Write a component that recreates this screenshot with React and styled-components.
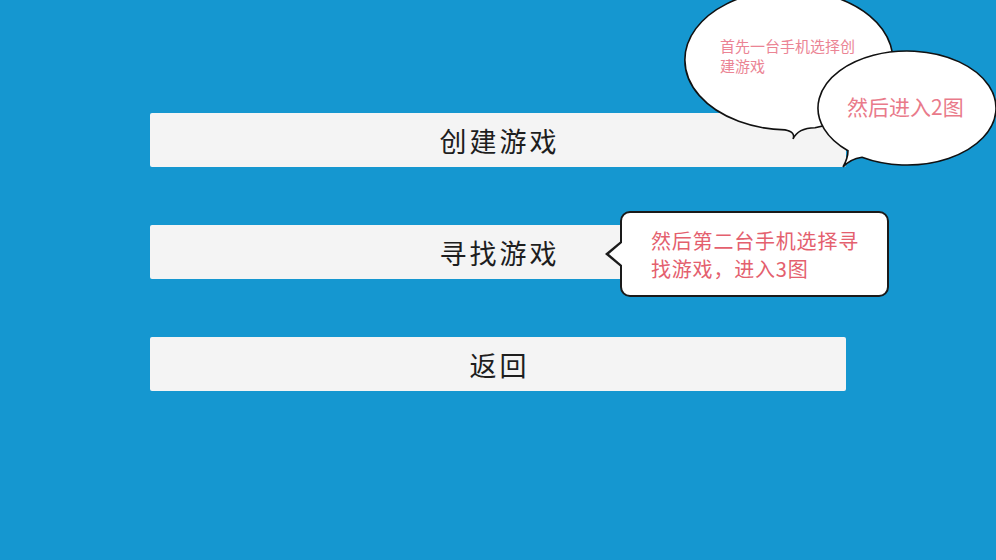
import styled, { createGlobalStyle } from "styled-components";

const GlobalStyle = createGlobalStyle`
	html, body {
		margin: 0;
		padding: 0;
		background: #1597d0;
	}
	body {
		font-family: "Noto Sans CJK SC", "Noto Sans", sans-serif;
	}
`;

const menuItems = ["创建游戏", "寻找游戏", "返回"];

const App = () => {
	return (
		<Stage>
			<GlobalStyle />
			<Menu>
				{menuItems.map((label) => (
					<MenuButton key={label}>{label}</MenuButton>
				))}
			</Menu>

			<Bubbles viewBox="0 0 996 560" width="996" height="560">
				<path
					d="M 785 129.9 A 104 70 0 1 1 815 127.7 Q 798 128 793 139 Q 796 132 785 129.9 Z"
					fill="#fff"
					stroke="#111"
					strokeWidth="1.6"
				/>
				<path
					d="M 848 150.7 A 89 57 0 1 1 862 157.2 Q 850 159 843 167 Q 848 158 848 150.7 Z"
					fill="#fff"
					stroke="#111"
					strokeWidth="1.6"
				/>
			</Bubbles>

			<BubbleText $left={720} $top={36} $size={15} $color="#eb8494">
				首先一台手机选择创
				<br />
				建游戏
			</BubbleText>
			<BubbleText $left={847} $top={93} $size={21} $color="#e97a8a">
				然后进入2图
			</BubbleText>

			<Callout>
				然后第二台手机选择寻
				<br />
				找游戏，进入3图
			</Callout>
		</Stage>
	);
};

const Stage = styled.div`
	position: relative;
	width: 996px;
	height: 560px;
	overflow: hidden;
	background: #1597d0;
`;

const Menu = styled.div`
	display: flex;
	flex-direction: column;
	gap: 58px;
	padding: 113px 0 0 150px;
	width: 696px;
`;

const MenuButton = styled.div`
	height: 54px;
	display: flex;
	align-items: center;
	justify-content: center;
	background: #f4f4f4;
	border-radius: 2px;
	color: #1e1e1e;
	font-family: "Noto Sans CJK SC", sans-serif;
	font-weight: 400;
	font-size: 27px;
	letter-spacing: 3px;
	padding-left: 3px;
	box-sizing: border-box;
`;

const Bubbles = styled.svg`
	position: absolute;
	left: 0;
	top: 0;
	pointer-events: none;
`;

const BubbleText = styled.div`
	position: absolute;
	left: ${(p) => p.$left}px;
	top: ${(p) => p.$top}px;
	font-size: ${(p) => p.$size}px;
	line-height: 1.33;
	color: ${(p) => p.$color};
	white-space: nowrap;
`;

const Callout = styled.div`
	position: absolute;
	left: 620px;
	top: 211px;
	width: 269px;
	height: 86px;
	box-sizing: border-box;
	padding: 14px 0 0 29px;
	background: #fff;
	border: 2px solid #1a1a1a;
	border-radius: 10px;
	color: #e4606e;
	font-size: 20px;
	line-height: 28px;
	letter-spacing: 0.8px;
	white-space: nowrap;

	&::before,
	&::after {
		content: "";
		position: absolute;
		top: 50%;
		transform: translateY(-50%);
		border-style: solid;
		border-color: transparent;
	}

	&::before {
		left: -17px;
		border-width: 14px 17px 14px 0;
		border-right-color: #1a1a1a;
	}

	&::after {
		left: -13px;
		border-width: 12px 14px 12px 0;
		border-right-color: #fff;
	}
`;

export default App;
